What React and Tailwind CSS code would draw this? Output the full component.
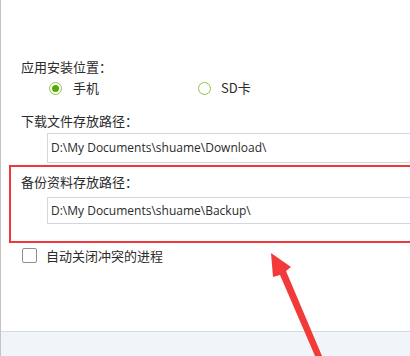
export default function App() {
  const font = { fontFamily: '"Noto Sans CJK SC", "Noto Sans", sans-serif' };
  const mono = { fontFamily: '"Open Sans", "Noto Sans", sans-serif' };
  return (
    <div className="relative w-[410px] h-[356px] overflow-hidden bg-white flex text-[#2b2b2b]" style={font}>
      <div className="w-[3px] h-full flex flex-col">
        <div className="flex-1 bg-white border-r border-[#c4c4c4]" />
        <div className="h-[25px] bg-[#5e9fb0] border-r border-[#c4c4c4]" />
      </div>
      <div className="flex-1 flex flex-col">
        <div className="flex-1 flex flex-col">
          <div className="mt-[57px] ml-[20px] h-[20px] leading-[20px] text-[13px]">应用安装位置：</div>
          <div className="mt-[1px] h-[20px] flex items-center text-[13px]">
            <div className="ml-[48px] flex items-center gap-[11px] w-[149px]">
              <span className="w-[13px] h-[13px] rounded-full border border-[#8cc63f] flex items-center justify-center">
                <span className="w-[7px] h-[7px] rounded-full bg-[#5aa800]" />
              </span>
              <span>手机</span>
            </div>
            <div className="flex items-center gap-[10px]">
              <span className="w-[13px] h-[13px] rounded-full border border-[#8cc63f]" />
              <span>SD卡</span>
            </div>
          </div>
          <div className="mt-[13px] ml-[20px] h-[20px] leading-[20px] text-[13px]">下载文件存放路径：</div>
          <div className="mt-[2px] ml-[46px] w-[400px] h-[30px] border border-[#d3d7dc] bg-white flex items-center pl-[3px] text-[12px]" style={mono}>
            D:\My Documents\shuame\Download\
          </div>
          <div className="mt-[2px] ml-[8px] w-[420px] h-[78px] border-2 border-[#f2373a] flex flex-col">
            <div className="mt-[5px] ml-[10px] h-[20px] leading-[20px] text-[13px]">备份资料存放路径：</div>
            <div className="mt-[5px] ml-[36px] w-[400px] h-[27px] border border-[#d3d7dc] bg-white flex items-center pl-[3px] text-[12px]" style={mono}>
              D:\My Documents\shuame\Backup\
            </div>
          </div>
          <div className="mt-[5px] ml-[21px] h-[15px] flex items-center gap-[9px] text-[13px]">
            <span className="w-[15px] h-[15px] rounded-[2px] border border-[#8f8f8f] bg-white" />
            <span>自动关闭冲突的进程</span>
          </div>
        </div>
        <div className="h-[25px] bg-[#f1f4f8] border-t border-[#d6d9dd]" />
      </div>
      <svg className="absolute left-0 top-0" width="410" height="356" viewBox="0 0 410 356">
        <polygon points="271,253 291,267 286,271 322,356 315,356 280,275 273,277" fill="#f23a3a" />
      </svg>
    </div>
  );
}
